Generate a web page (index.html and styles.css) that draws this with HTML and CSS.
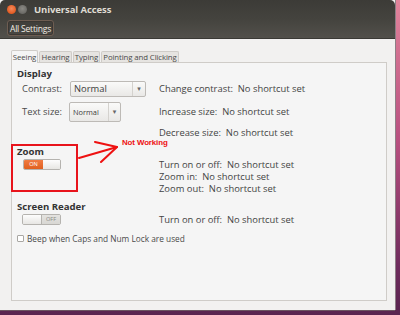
FILE: index.html
```html
<!DOCTYPE html>
<html>
<head>
<meta charset="utf-8">
<link rel="stylesheet" href="styles.css">
</head>
<body>
<div class="window">
  <div class="titlebar">
    <div class="titlerow">
      <span class="wbtn close"></span>
      <span class="wbtn min"></span>
      <span class="title">Universal Access</span>
    </div>
    <div class="toolbar">
      <span class="allset">All Settings</span>
    </div>
  </div>
  <div class="content">
    <div class="tabs">
      <div class="tab active">Seeing</div>
      <div class="tab">Hearing</div>
      <div class="tab">Typing</div>
      <div class="tab">Pointing and Clicking</div>
    </div>
    <div class="panel">
      <div class="row head r-display"><div class="left">Display</div></div>
      <div class="row r-contrast">
        <div class="left">
          <span class="lbl">Contrast:</span>
          <span class="combo big"><span class="ctext">Normal</span><span class="carrow">▾</span></span>
        </div>
        <div class="right">Change contrast: &nbsp;No shortcut set</div>
      </div>
      <div class="row r-textsize">
        <div class="left">
          <span class="lbl">Text size:</span>
          <span class="combo small"><span class="ctext">Normal</span><span class="carrow">▾</span></span>
        </div>
        <div class="right">Increase size: &nbsp;No shortcut set</div>
      </div>
      <div class="row r-decrease">
        <div class="left"></div>
        <div class="right">Decrease size: &nbsp;No shortcut set</div>
      </div>
      <div class="row head r-zoom"><div class="left">Zoom</div></div>
      <div class="row r-line">
        <div class="left"><span class="switch on"><span class="sw-label">ON</span><span class="knob"></span></span></div>
        <div class="right">Turn on or off: &nbsp;No shortcut set</div>
      </div>
      <div class="row r-line">
        <div class="left"></div>
        <div class="right">Zoom in: &nbsp;No shortcut set</div>
      </div>
      <div class="row r-line">
        <div class="left"></div>
        <div class="right">Zoom out: &nbsp;No shortcut set</div>
      </div>
      <div class="row head r-reader"><div class="left">Screen Reader</div></div>
      <div class="row r-line">
        <div class="left"><span class="switch off"><span class="knob"></span><span class="sw-label">OFF</span></span></div>
        <div class="right">Turn on or off: &nbsp;No shortcut set</div>
      </div>
      <div class="row r-check">
        <span class="checkbox"></span><span class="cblabel">Beep when Caps and Num Lock are used</span>
      </div>
    </div>
  </div>
  <div class="annot-box"></div>
  <svg class="annot-arrow" width="44" height="28" viewBox="0 0 44 28">
    <path d="M1 17 L39 6" stroke="#ee1111" stroke-width="2" fill="none" stroke-linecap="round"/>
    <path d="M17 1 L39 6 L23 21" stroke="#ee1111" stroke-width="2" fill="none" stroke-linecap="round" stroke-linejoin="round"/>
  </svg>
  <div class="annot-text">Not Working</div>
</div>
</body>
</html>
```

FILE: styles.css
```css
* { box-sizing: border-box; }

body {
  margin: 0;
  width: 400px;
  height: 315px;
  overflow: hidden;
  background: linear-gradient(180deg, #e2849c 0%, #b84f7f 45%, #6e2b5c 85%, #5a2550 100%);
  font-family: "Open Sans", "DejaVu Sans", sans-serif;
  color: #3c3c3c;
}

.window {
  position: relative;
  width: 395px;
  height: 310px;
  background: #f2f1f0;
  box-shadow: 1px 0 0 #8d7f86, 0 1px 0 #6b5560;
  display: flex;
  flex-direction: column;
}

.titlebar {
  height: 39px;
  background: linear-gradient(180deg, #3c3b37 0%, #44433e 50%, #52504b 100%);
  border-bottom: 1px solid #3a3935;
  border-radius: 5px 5px 0 0;
  display: flex;
  flex-direction: column;
}

.titlerow {
  height: 19px;
  display: flex;
  align-items: center;
  padding-left: 7px;
}

.wbtn {
  width: 9px;
  height: 9px;
  border-radius: 50%;
  margin-right: 2px;
}

.wbtn.close {
  background: radial-gradient(circle at 50% 40%, #f4885a 0%, #e35b22 70%, #b5451a 100%);
}

.wbtn.min {
  background: radial-gradient(circle at 50% 40%, #8a8984 0%, #6b6a66 70%, #4f4e4a 100%);
}

.title {
  margin-left: 5px;
  font-weight: bold;
  font-size: 9.5px;
  color: #dfdbd2;
  letter-spacing: -0.1px;
}

.toolbar {
  flex: 1;
  display: flex;
  align-items: flex-start;
  padding-left: 7px;
  padding-top: 1px;
}

.allset {
  height: 16px;
  width: 47px;
  display: flex;
  align-items: center;
  justify-content: center;
  border: 1px solid #6e5d52;
  border-radius: 3px;
  background: linear-gradient(180deg, #3f3d39, #4a4843);
  box-shadow: inset 0 0 0 1px #3a3733;
  color: #f0ece4;
  font-size: 8.5px;
  letter-spacing: -0.2px;
  white-space: nowrap;
}

.content {
  flex: 1;
  padding: 11px 8px 9px 11px;
  display: flex;
  flex-direction: column;
}

.tabs {
  display: flex;
  align-items: flex-end;
  height: 12px;
  gap: 1px;
}

.tab {
  height: 11px;
  padding: 0 1px;
  font-size: 7.8px;
  line-height: 10px;
  color: #4a4a4a;
  background: #e6e4e1;
  border: 1px solid #cfccc8;
  border-bottom: none;
  border-radius: 2px 2px 0 0;
  white-space: nowrap;
  letter-spacing: -0.1px;
  display: flex;
  align-items: center;
  justify-content: center;
}

.tab:nth-child(1) { width: 27px; }
.tab:nth-child(2) { width: 33px; }
.tab:nth-child(3) { width: 27px; }
.tab:nth-child(4) { width: 78px; }

.tab.active {
  height: 13px;
  margin-bottom: -1px;
  background: #f5f5f5;
  position: relative;
  z-index: 1;
}

.panel {
  flex: 1;
  background: #f5f5f5;
  border: 1px solid #cfccc8;
  padding: 3px 0 0 5px;
  display: flex;
  flex-direction: column;
}

.row {
  display: flex;
  align-items: center;
  font-size: 9.4px;
  white-space: nowrap;
}

.left {
  width: 142px;
  flex: none;
  display: flex;
  align-items: center;
  height: 100%;
}

.right {
  color: #444;
}

.head .left {
  font-weight: bold;
  font-size: 9.6px;
  color: #333;
}

.r-display { height: 14px; }
.r-contrast { height: 17px; }
.r-textsize { height: 21px; margin-top: 4px; }
.r-decrease { height: 20px; }
.r-zoom { height: 14px; margin-top: 2px; }
.r-line { height: 12px; }
.r-reader { height: 13px; margin-top: 6px; }
.r-check { height: 13px; margin-top: 7px; }

.lbl {
  margin-left: 5px;
  color: #4a4a4a;
}

.r-contrast .lbl { width: 48px; }
.r-textsize .lbl { width: 47px; }

.combo {
  display: flex;
  align-items: center;
  border: 1px solid #bdbab6;
  border-radius: 2px;
  background: linear-gradient(180deg, #fafaf9, #e9e8e6);
  color: #3c3c3c;
}

.combo.big {
  width: 76px;
  height: 16px;
  font-size: 9.4px;
}

.combo.small {
  width: 52px;
  height: 20px;
  font-size: 7.4px;
}

.ctext {
  flex: 1;
  padding-left: 3px;
}

.carrow {
  height: 100%;
  display: flex;
  align-items: center;
  justify-content: center;
  border-left: 1px solid #d4d2ce;
  color: #666;
  font-size: 7px;
}

.combo.big .carrow { width: 13px; }
.combo.small .carrow { width: 12px; }

.switch {
  display: flex;
  height: 11px;
  border: 1px solid #b5b3af;
  border-radius: 2px;
  overflow: hidden;
}

.switch.on { width: 38px; margin-left: 6px; }
.switch.off { width: 39px; margin-left: 5px; }

.switch .sw-label {
  width: 19px;
  display: flex;
  align-items: center;
  justify-content: center;
  font-size: 5.6px;
}

.switch.on .sw-label {
  background: linear-gradient(180deg, #f07b42, #e0601f);
  color: #fff;
}

.switch.off .sw-label {
  background: linear-gradient(180deg, #e4e3e0, #d8d7d3);
  color: #8a8986;
  border-left: 1px solid #b5b3af;
}

.switch .knob {
  flex: 1;
  background: linear-gradient(180deg, #fdfdfd, #e7e6e3);
}

.checkbox {
  width: 7px;
  height: 7px;
  border: 1px solid #a9a7a3;
  border-radius: 1px;
  background: #fff;
}

.cblabel {
  margin-left: 3px;
  font-size: 8.3px;
  color: #4a4a4a;
}

.annot-box {
  position: absolute;
  left: 11px;
  top: 144px;
  width: 67px;
  height: 48px;
  border: 2px solid #e8141c;
}

.annot-arrow {
  position: absolute;
  left: 78px;
  top: 141px;
}

.annot-text {
  position: absolute;
  left: 122px;
  top: 138px;
  font-family: "Liberation Sans", sans-serif;
  font-weight: bold;
  font-size: 7.9px;
  color: #ee1111;
  letter-spacing: -0.1px;
}
```
